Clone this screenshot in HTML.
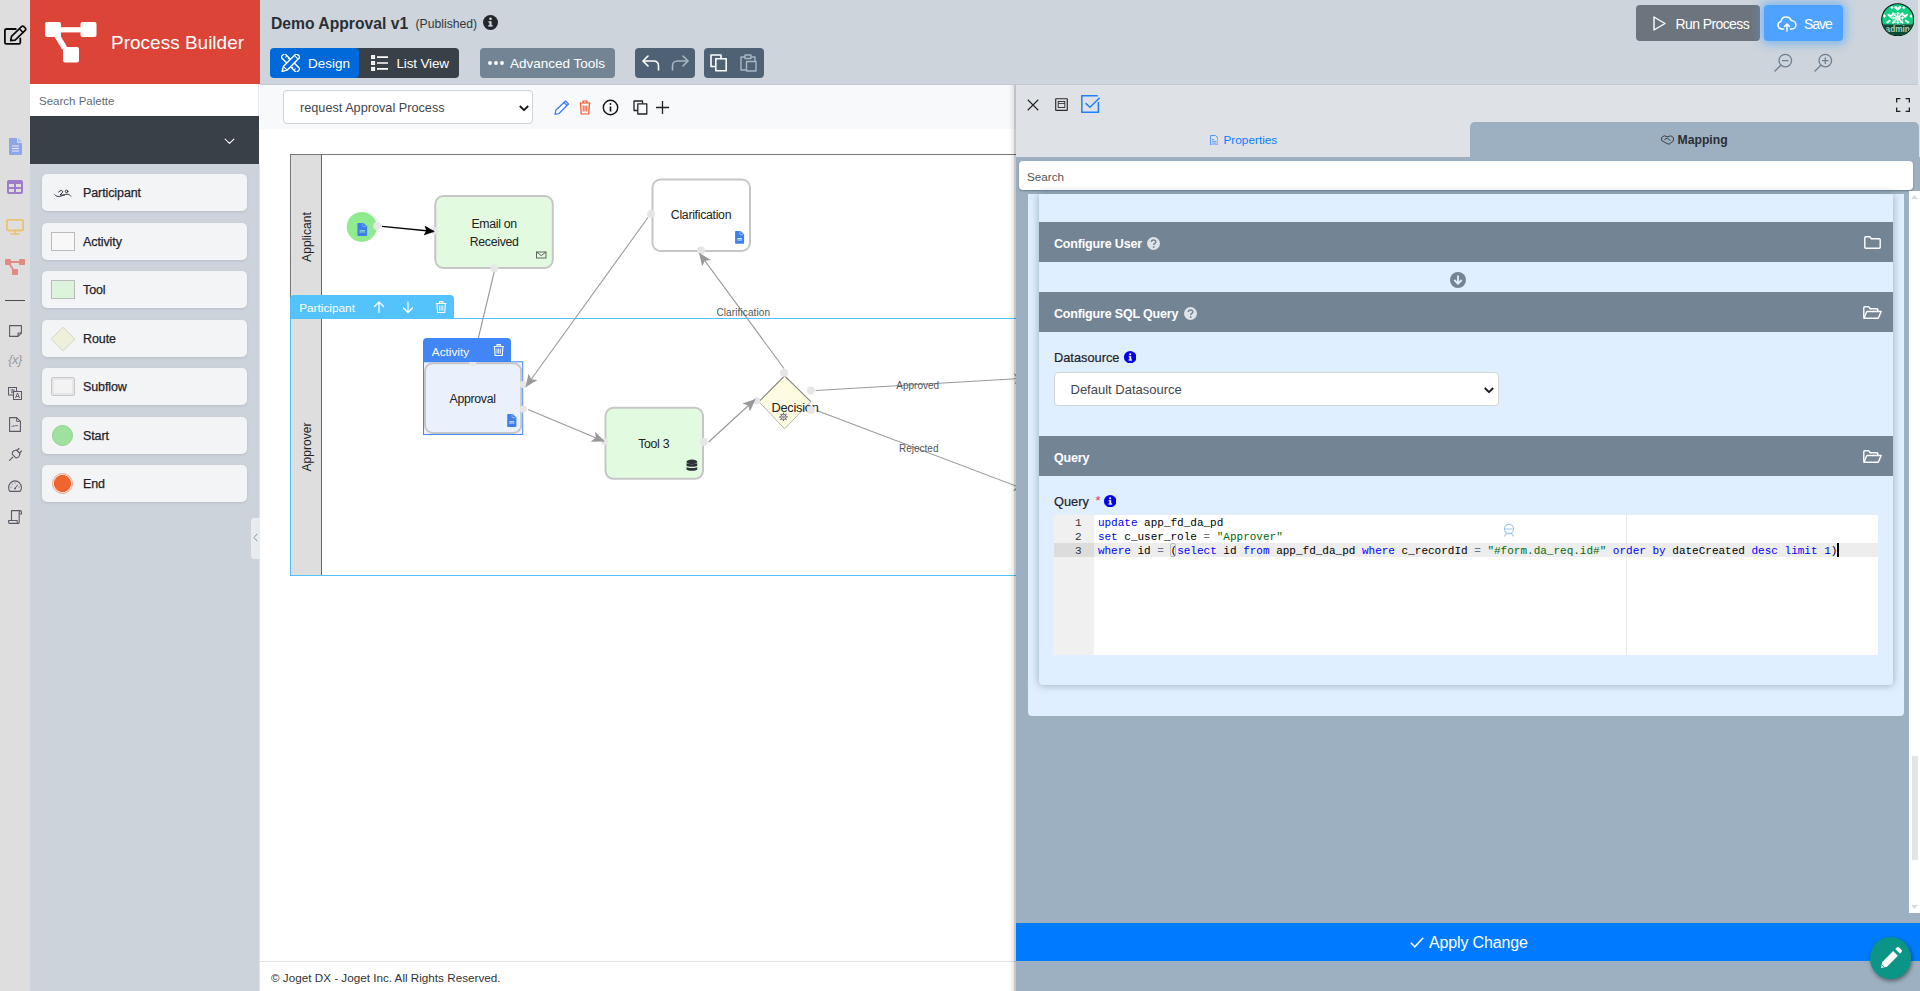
<!DOCTYPE html>
<html>
<head>
<meta charset="utf-8">
<title>Process Builder</title>
<style>
*{box-sizing:border-box;margin:0;padding:0}
html,body{width:1920px;height:991px;overflow:hidden;background:#fff;font-family:"Liberation Sans",sans-serif;font-size:13px;color:#212529}
.abs{position:absolute}
#rail{position:absolute;left:0;top:0;width:30px;height:991px;background:#dedede}
#brand{position:absolute;left:30px;top:0;width:230px;height:84px;background:#dc4438}
#brand .t{position:absolute;left:81px;top:32px;font-size:19px;color:#fff;white-space:nowrap;letter-spacing:0px}
#palsearch{position:absolute;left:30px;top:84px;width:229px;height:32px;background:#fff;border-right:1px solid #e4e6e9}
#palsearch span{position:absolute;left:9px;top:11px;font-size:11.5px;color:#5f6c78}
#paldark{position:absolute;left:30px;top:116px;width:229px;height:48px;background:#394047}
#palette{position:absolute;left:30px;top:164px;width:230px;height:827px;background:#cdd3da;border-right:1px solid #dde1e6}
.pi{position:absolute;left:12px;width:205px;height:37px;background:#f3f4f6;border-radius:5px;box-shadow:0 1px 3px rgba(0,0,0,.10)}
.pi .lbl{position:absolute;left:41px;top:12px;font-size:12.5px;color:#1f2328;font-weight:normal;-webkit-text-stroke:.25px #1f2328;letter-spacing:-.1px}
#topbar{position:absolute;left:260px;top:0;width:1660px;height:85px;background:#cdd4db;border-bottom:1px solid #c5c8cb}
.btn{position:absolute;height:30px;top:48px;color:#fff;font-size:15px;white-space:nowrap}
#canvasbar{position:absolute;left:260px;top:85px;width:756px;height:44px;background:#f8f9fb}
#canvas{position:absolute;left:260px;top:129px;width:756px;height:833px;background:#fff;overflow:hidden}
#footer{position:absolute;left:260px;top:961px;width:756px;height:30px;background:#fff;border-top:1px solid #e2e4e6}
#footer span{position:absolute;left:11px;top:9px;font-size:11.7px;color:#333;white-space:nowrap}
#panel{position:absolute;left:1016px;top:85px;width:904px;height:906px;background:#9db0c1}

.tb{position:absolute;top:48px;height:30px;border-radius:4px}
.tt{position:absolute;top:7px;font-size:13.5px;color:#fff;white-space:nowrap}

.nl{position:absolute;font-size:12.3px;letter-spacing:-.3px;color:#222;text-align:center;white-space:nowrap;line-height:17.5px}
.el{position:absolute;font-size:10px;color:#555;white-space:nowrap}

#panel .hd{position:absolute;left:23px;width:854px;height:40px;background:#738595}
#panel .hd .t{position:absolute;left:15px;top:15px;font-size:12.5px;font-weight:bold;color:#fff;letter-spacing:-.17px;white-space:nowrap}
.kw{color:#0000ff}.st{color:#036a07}.op{color:#687687}.nu{color:#0000cd}
.cl{position:absolute;left:82px;height:14px;line-height:16px;font-family:"Liberation Mono",monospace;font-size:11px;color:#000;white-space:pre}
.ln{position:absolute;left:0;width:27.5px;height:14px;line-height:16px;text-align:right;font-family:"Liberation Mono",monospace;font-size:11px;color:#333}
</style>
</head>
<body>
<div id="rail">
<svg class="abs" style="left:0;top:24px" width="28" height="24" viewBox="0 0 28 24" fill="none" stroke="#0a0a0a" stroke-width="1.8" stroke-linejoin="round" stroke-linecap="round"><path d="M15.8 5H6.3Q4.9 5 4.9 6.4V18.5Q4.9 19.9 6.3 19.9H18.9Q20.3 19.9 20.3 18.5V14.5"/><path d="M10.7 16.7L11.5 12.3 21.8 2.4Q22.8 1.6 23.8 2.5L25.5 4.3Q26.3 5.3 25.4 6.2L15.1 16.1z" stroke-width="1.7"/><path d="M19.4 4.8l3.6 3.7" stroke-width="1.5"/></svg>
<svg class="abs" style="left:9px;top:138px" width="13" height="17" viewBox="0 0 13 17"><path d="M0 1.2C0 .5.5 0 1.2 0H8v3.8C8 4.5 8.5 5 9.2 5H13v10.8c0 .7-.5 1.2-1.2 1.2H1.2C.5 17 0 16.5 0 15.8z" fill="#8ea6e8"/><path d="M9 0l4 4H9.7C9.3 4 9 3.7 9 3.3z" fill="#a9bcf0"/><path d="M3 8h7M3 10.5h7M3 13h7" stroke="#e6ecfb" stroke-width="1.1"/></svg>
<svg class="abs" style="left:7px;top:180px" width="16" height="14" viewBox="0 0 16 14"><rect x="0" y="0" width="16" height="14" rx="2" fill="#9d7cc9"/><rect x="2" y="4" width="5" height="3" fill="#dedede"/><rect x="9" y="4" width="5" height="3" fill="#dedede"/><rect x="2" y="9" width="5" height="3" fill="#dedede"/><rect x="9" y="9" width="5" height="3" fill="#dedede"/></svg>
<svg class="abs" style="left:6px;top:219px" width="18" height="16" viewBox="0 0 18 16" fill="none" stroke="#ecc170" stroke-width="1.8"><rect x=".9" y=".9" width="16.2" height="10.6" rx="1.2"/><path d="M9 11.5v3M4.5 15h9" stroke-width="1.6"/></svg>
<svg class="abs" style="left:5px;top:259px" width="20" height="16" viewBox="0 0 20 16"><rect x="0" y="0" width="6" height="6" rx=".8" fill="#e18a83"/><rect x="14" y="0" width="6" height="6" rx=".8" fill="#e18a83"/><rect x="7" y="10" width="6" height="6" rx=".8" fill="#e18a83"/><path d="M5 3h10M4 4l5 8" stroke="#e18a83" stroke-width="1.8"/></svg>
<div class="abs" style="left:5px;top:300px;width:20px;height:1px;background:#4a4a4a"></div>
<svg class="abs" style="left:9px;top:325px" width="13" height="12" viewBox="0 0 13 12" fill="none" stroke="#5d5866" stroke-width="1.1" stroke-linejoin="round"><path d="M.6.6h11.8v7.4L9 11.4H.6z"/><path d="M12.4 8H9v3.4"/></svg>
<div class="abs" style="left:6px;top:352px;width:18px;text-align:center;font-size:13px;font-style:italic;color:#9a9aa2;letter-spacing:-.5px">{x}</div>
<svg class="abs" style="left:8px;top:387px" width="14" height="13" viewBox="0 0 14 13" fill="none" stroke="#5d5866" stroke-width="1"><rect x=".5" y=".5" width="8" height="7.5" fill="#dedede"/><rect x="5.5" y="4.5" width="8" height="8" fill="#dedede"/><path d="M2.5 3h4M4.5 2v1.2M3 6c1.5-.5 2.5-1.5 3-3M3.5 4c.5 1 1.2 1.6 2.5 2" stroke-width=".8"/><path d="M7.5 11l2-5 2 5M8.2 9.5h2.6" stroke-width=".9"/></svg>
<svg class="abs" style="left:9px;top:417px" width="12" height="15" viewBox="0 0 12 15" fill="none" stroke="#5d5866" stroke-width="1.1" stroke-linejoin="round"><path d="M.6.6h7l3.8 3.8v10H.6z"/><path d="M7.6.6v3.8h3.8" stroke-width=".9"/><path d="M2.5 10l1.5-1.5 1.2 1 1.5-1.5 1 1 1.2-.5" stroke-width=".9"/></svg>
<svg class="abs" style="left:9px;top:448px" width="13" height="13" viewBox="0 0 13 13" fill="none" stroke="#5d5866" stroke-width="1.1" stroke-linecap="round" stroke-linejoin="round"><path d="M.6 12.4l3.2-3.2"/><path d="M3.2 6.2l3.6 3.6c1.5.2 2.8-.6 3.4-1.8L11 5.5 7.5 2 5 2.8C3.8 3.4 3 4.7 3.2 6.2z"/><path d="M8 2.5l2-2M10.5 5l2-2"/></svg>
<svg class="abs" style="left:8px;top:480px" width="14" height="12" viewBox="0 0 14 12" fill="none" stroke="#5d5866" stroke-width="1.1" stroke-linecap="round"><path d="M2 11.4C1.1 10.3.6 8.9.6 7.4.6 3.8 3.5.9 7 .9s6.4 2.9 6.4 6.5c0 1.5-.5 2.9-1.4 4z"/><path d="M7 8.5l2.5-3.5" stroke-width="1"/><circle cx="7" cy="8.5" r=".9" fill="#5d5866" stroke="none"/><path d="M3 7h.1M4.2 4.2h.1M7 3h.1M11 7h.1" stroke-width="1"/></svg>
<svg class="abs" style="left:8px;top:510px" width="14" height="14" viewBox="0 0 14 14" fill="none" stroke="#5d5866" stroke-width="1.1" stroke-linejoin="round"><path d="M3.5 10.5V.6h8.5c.8 0 1.4.6 1.4 1.4V4h-2.2"/><path d="M11.2 4V2c0-.8.4-1.4 1-1.4"/><path d="M.6 10.5h8.6v1.5c0 .8.6 1.4 1.4 1.4H2c-.8 0-1.4-.6-1.4-1.4z"/><path d="M11.2 4v8c0 .8-.3 1.4-.8 1.4"/></svg>
</div>
<div id="brand">
<svg class="abs" style="left:15px;top:22px" width="52" height="41" viewBox="0 0 52 41"><rect x="0" y="0" width="16" height="15" rx="2" fill="#fff"/><rect x="35.5" y="0" width="16" height="15" rx="2" fill="#fff"/><rect x="18" y="25" width="16" height="15.5" rx="2" fill="#fff"/><path d="M14 7.8h24" stroke="#fff" stroke-width="5.2"/><path d="M10.5 11l9 15" stroke="#fff" stroke-width="5.6"/></svg>
<div class="t">Process Builder</div></div>
<div id="palsearch"><span>Search Palette</span></div>
<div id="paldark"><svg class="abs" style="left:193.5px;top:22.3px" width="11" height="7" viewBox="0 0 12 8" fill="none" stroke="#fff" stroke-width="1.25" stroke-linecap="round" stroke-linejoin="round"><path d="M1 1.2l5 5 5-5"/></svg></div>
<div id="palette">
<div class="pi" style="top:10px"><svg class="abs" style="left:12px;top:15px" width="18" height="9" viewBox="0 0 18 9" fill="none" stroke="#2a2a3a" stroke-width=".95" stroke-linecap="round" stroke-linejoin="round"><path d="M.6 5.6c1.5 1.8 3.5 2.3 6 1.6 2.5-.7 4-2 6.5-2 1.8 0 2.8.8 3.8 2"/><path d="M4.6 3L7.2 1.2l1.8 1.6L6 6h4.5"/><circle cx="12.6" cy="2.4" r="1.3"/></svg><div class="lbl">Participant</div></div>
<div class="pi" style="top:58.5px"><div class="abs" style="left:9px;top:9px;width:24px;height:19px;background:#f8f8f9;border:1px solid #bbb"></div><div class="lbl">Activity</div></div>
<div class="pi" style="top:107px"><div class="abs" style="left:9px;top:9px;width:24px;height:19px;background:#dcf3dc;border:1px solid #bbb"></div><div class="lbl">Tool</div></div>
<div class="pi" style="top:155.5px"><svg class="abs" style="left:8px;top:6px" width="26" height="26" viewBox="0 0 26 26"><path d="M13 1.2L24.8 13 13 24.8 1.2 13z" fill="#eef0dc" stroke="#d4d6c4" stroke-width="1"/></svg><div class="lbl">Route</div></div>
<div class="pi" style="top:204px"><div class="abs" style="left:9px;top:9px;width:24px;height:19px;background:#f3f3f4;border:1px solid #c8c8c8;border-radius:2px;box-shadow:inset 0 0 0 2px #e6e6e8"></div><div class="lbl">Subflow</div></div>
<div class="pi" style="top:252.5px"><div class="abs" style="left:10px;top:8px;width:21px;height:21px;border-radius:50%;background:#9fe29f;border:1px solid #8fd08f"></div><div class="lbl">Start</div></div>
<div class="pi" style="top:301px"><div class="abs" style="left:10px;top:8px;width:21px;height:21px;border-radius:50%;background:radial-gradient(circle,#f0642f 0,#f0642f 8.2px,#fce4da 8.8px,#fce4da 100%);border:1px solid #f3a78c"></div><div class="lbl">End</div></div>
<div class="abs" style="left:221px;top:354px;width:9px;height:41px;background:#e9ecef;border-radius:3px 0 0 3px"><svg class="abs" style="left:2px;top:15px" width="5" height="9" viewBox="0 0 5 9" fill="none" stroke="#8a96a3" stroke-width="1"><path d="M4.2.8L1 4.5l3.2 3.7"/></svg></div>
</div>
<div id="topbar">
<div class="abs" style="left:11px;top:14.5px;font-size:15.7px;font-weight:bold;color:#2b2f33;white-space:nowrap">Demo Approval v1</div>
<div class="abs" style="left:155.5px;top:17px;font-size:12.2px;color:#33383d;white-space:nowrap">(Published)</div>
<svg class="abs" style="left:223px;top:15px" width="15" height="15" viewBox="0 0 15 15"><circle cx="7.5" cy="7.5" r="7.5" fill="#23272b"/><rect x="6.4" y="6.3" width="2.2" height="5" fill="#cdd4db"/><rect x="5.4" y="6.3" width="2" height="1.3" fill="#cdd4db"/><rect x="5.2" y="10.2" width="4.6" height="1.3" fill="#cdd4db"/><circle cx="7.5" cy="3.8" r="1.35" fill="#cdd4db"/></svg>

<div class="tb" style="left:10px;width:89px;background:#0069d9;border-radius:4px;z-index:2">
<svg class="abs" style="left:11px;top:6px" width="19" height="18" viewBox="0 0 19 18" fill="#0069d9" stroke="#fff" stroke-width="1.4" stroke-linejoin="round"><g transform="rotate(45 9.5 9)"><rect x="-1.5" y="6.4" width="22" height="5.2"/><path d="M2 6.7v2M5 6.7v1.5M14 11.3v-1.5M17 11.3v-2" stroke-width="1"/></g><g transform="rotate(-45 9.5 9)"><path d="M20.5 6.4H2L-2.4 9 2 11.6h18.5z"/><path d="M2 6.7v4.6M17.5 6.7v4.6" stroke-width="1.1"/></g></svg>
<div class="tt" style="left:38px;top:8px">Design</div></div>
<div class="tb" style="left:92px;width:107px;background:#394047;border-radius:0 4px 4px 0">
<svg class="abs" style="left:19px;top:7px" width="17" height="16" viewBox="0 0 17 16" fill="#e8e8e8" stroke="#fff"><rect x=".6" y=".6" width="3" height="3" stroke-width="1"/><rect x=".6" y="6.5" width="3" height="3" stroke-width="1"/><rect x=".6" y="12.4" width="3" height="3" stroke-width="1"/><path d="M6 2.1h11M6 8h11M6 13.9h11" stroke-width="1.7"/></svg>
<div class="tt" style="left:44.5px;top:8px;letter-spacing:-.15px">List View</div></div>

<div class="tb" style="left:220px;width:135px;background:#738595">
<svg class="abs" style="left:8px;top:13px" width="17" height="4" viewBox="0 0 17 4" fill="#fff"><circle cx="2" cy="2" r="1.9"/><circle cx="8" cy="2" r="1.9"/><circle cx="14" cy="2" r="1.9"/></svg>
<div class="tt" style="left:30px;top:8px;letter-spacing:0">Advanced Tools</div></div>

<div class="tb" style="left:375px;width:60px;background:#4f6275">
<svg class="abs" style="left:7px;top:7px" width="18" height="16" viewBox="0 0 18 16" fill="none" stroke="#fff" stroke-width="1.6" stroke-linecap="round" stroke-linejoin="round"><path d="M6 1L1 6l5 5"/><path d="M1.5 6h10c3 0 5 2 5 5v4"/></svg>
<svg class="abs" style="left:36px;top:7px" width="18" height="16" viewBox="0 0 18 16" fill="none" stroke="#a9b6c3" stroke-width="1.6" stroke-linecap="round" stroke-linejoin="round"><path d="M12 1l5 5-5 5"/><path d="M16.5 6h-10c-3 0-5 2-5 5v4"/></svg>
</div>
<div class="tb" style="left:444px;width:60px;background:#4f6275">
<svg class="abs" style="left:6px;top:6px" width="18" height="18" viewBox="0 0 18 18" fill="none" stroke="#fff" stroke-width="1.6" stroke-linejoin="round"><path d="M5.5 12.5H1V1h10v3.5"/><rect x="5.8" y="4.8" width="10.4" height="12"/></svg>
<svg class="abs" style="left:36px;top:6px" width="17" height="18" viewBox="0 0 17 18" fill="none" stroke="#a9b6c3" stroke-width="1.4" stroke-linejoin="round"><path d="M5 3H1v13h5"/><path d="M11 3h4v4"/><rect x="5" y="1" width="6" height="3.5"/><rect x="6.5" y="7.5" width="9.5" height="9.5"/></svg>
</div>

<div class="abs" style="left:1376px;top:5px;width:124px;height:36px;border-radius:4px;background:#6c757d">
<svg class="abs" style="left:17px;top:11px" width="13" height="15" viewBox="0 0 13 15" fill="none" stroke="#fff" stroke-width="1.4" stroke-linejoin="round"><path d="M1 1l11 6.5L1 14z"/></svg>
<div class="abs" style="left:39.5px;top:11px;font-size:14px;color:#fff;white-space:nowrap;letter-spacing:-.6px">Run Process</div></div>
<div class="abs" style="left:1504px;top:5px;width:79px;height:36px;border-radius:4px;background:#4da3ff;box-shadow:0 0 10px 3px rgba(77,163,255,.6)">
<svg class="abs" style="left:13px;top:11px" width="20" height="16" viewBox="0 0 20 16" fill="none" stroke="#fff" stroke-width="1.5" stroke-linecap="round" stroke-linejoin="round"><path d="M6.5 13H5c-2.3 0-4-1.7-4-3.8 0-1.8 1.3-3.3 3-3.7C4.3 2.9 6.5 1 9.2 1c2.3 0 4.3 1.4 5 3.5C16.9 4.7 19 6.6 19 9c0 2.2-1.8 4-4 4h-1.5"/><path d="M10 15V8.5M7.5 10.5L10 8l2.5 2.5"/></svg>
<div class="abs" style="left:40px;top:11px;font-size:14px;color:#fff;white-space:nowrap;letter-spacing:-1px">Save</div></div>

<svg class="abs" style="left:1514px;top:53px" width="19" height="19" viewBox="0 0 19 19" fill="none" stroke="#6c7f91" stroke-width="1.3" stroke-linecap="round"><circle cx="11.3" cy="7.6" r="6.3"/><path d="M6.8 12.2L1 18"/><path d="M8.5 7.6h5.6"/></svg>
<svg class="abs" style="left:1554px;top:53px" width="19" height="19" viewBox="0 0 19 19" fill="none" stroke="#6c7f91" stroke-width="1.3" stroke-linecap="round"><circle cx="11.3" cy="7.6" r="6.3"/><path d="M6.8 12.2L1 18"/><path d="M8.5 7.6h5.6M11.3 4.8v5.6"/></svg>

<svg class="abs" style="left:1620.5px;top:2.5px" width="33.5" height="33.5" viewBox="0 0 34 34"><defs><clipPath id="avc"><circle cx="17" cy="17" r="15.7"/></clipPath></defs><circle cx="17" cy="17" r="16.8" fill="#0c1512"/><g clip-path="url(#avc)"><rect width="34" height="34" fill="#10cf80"/>
<g transform="translate(0 -2.3)"><g fill="#fff"><path d="M17 10.5l-3.2-3.2c-.9-1 .6-2.6 1.7-1.6l1.5 1.3 1.5-1.3c1.1-1 2.6.6 1.7 1.6z"/><path d="M9.5 17.5l-2.7-2.7c-.8-.9.5-2.2 1.4-1.4l1.3 1.1 1.3-1.1c.9-.8 2.2.5 1.4 1.4z"/><path d="M24.5 17.5l-2.7-2.7c-.8-.9.5-2.2 1.4-1.4l1.3 1.1 1.3-1.1c.9-.8 2.2.5 1.4 1.4z"/><path d="M11 5l1.6 2L11 9 9.4 7zM23 5l1.6 2L23 9l-1.6-2zM3.5 13.5l1.5 2-1.5 2-1.5-2zM30.5 13.5l1.5 2-1.5 2-1.5-2z"/><path d="M5 21.5l4-2.5 1 1.3-3.5 3zM29 21.5l-4-2.5-1 1.3 3.5 3z"/></g>
<g stroke="#fff" fill="none"><path d="M17 11.5v13M11.5 12l11 11M22.5 12l-11 11M10.5 17.5h13" stroke-width="1.7" opacity=".92"/><rect x="12.3" y="12.8" width="9.4" height="9.4" stroke-width=".8" opacity=".7"/><path d="M13 24v2M21 24v2M15 23.5v2.5M19 23.5v2.5" stroke-width="1.2"/></g></g>
<rect x="0" y="22" width="34" height="12" fill="#0b4a32"/><rect x="0" y="22" width="34" height="1.5" fill="#23463a"/><text x="17" y="29.8" font-family="Liberation Sans, sans-serif" font-size="8.4" fill="#a9d3bf" text-anchor="middle" font-weight="bold">admin</text></g></svg>
</div>
<div class="abs" style="left:1918.3px;top:0;width:1.7px;height:85px;background:#e3e6ea"></div>
<div id="canvasbar">
<div class="abs" style="left:23px;top:5px;width:250px;height:34px;background:#fff;border:1px solid #ced4da;border-radius:4px">
<div class="abs" style="left:16px;top:10px;font-size:12.7px;color:#3f464d;white-space:nowrap">request Approval Process</div>
<svg class="abs" style="left:235px;top:14px" width="10" height="7" viewBox="0 0 10 7" fill="none" stroke="#1a1a1a" stroke-width="1.9" stroke-linejoin="round"><path d="M.8 1l4.2 4.2L9.2 1"/></svg></div>
<svg class="abs" style="left:294px;top:15px" width="16" height="15" viewBox="0 0 16 15" fill="none" stroke="#3b7cf5" stroke-width="1.2" stroke-linejoin="round"><path d="M11.5 1l3 3L5 13.5l-4 .8.8-4z"/><path d="M10 2.5l3 3" /></svg>
<svg class="abs" style="left:319px;top:15px" width="12" height="15" viewBox="0 0 12 15" fill="none" stroke="#f4511e" stroke-width="1.2" stroke-linejoin="round"><path d="M.6 3h10.8M4 3V1h4v2M1.6 3l.6 11h7.6l.6-11" /><path d="M4.2 5.5v6M6 5.5v6M7.8 5.5v6" stroke-width="1"/></svg>
<svg class="abs" style="left:342px;top:14px" width="17" height="17" viewBox="0 0 17 17" fill="none" stroke="#111" stroke-width="1.4"><circle cx="8.5" cy="8.5" r="7.2"/><path d="M8.5 7.5v5" stroke-width="1.6"/><circle cx="8.5" cy="5" r=".95" fill="#111" stroke="none"/></svg>
<svg class="abs" style="left:373px;top:15px" width="15" height="15" viewBox="0 0 15 15" fill="none" stroke="#222" stroke-width="1.3" stroke-linejoin="round"><path d="M4.5 10.5H1V1h8.5v2.5"/><rect x="4.8" y="3.8" width="9" height="10.2"/></svg>
<svg class="abs" style="left:396px;top:16px" width="13" height="13" viewBox="0 0 13 13" fill="none" stroke="#222" stroke-width="1.3"><path d="M6.5 0v13M0 6.5h13"/></svg>
</div>
<div id="canvas">
<svg class="abs" style="left:0;top:0" width="756" height="833" viewBox="260 129 756 833">
<defs>
<marker id="ag" markerWidth="14" markerHeight="11" refX="12" refY="5.5" orient="auto" markerUnits="userSpaceOnUse"><path d="M0 0L12.8 5.5 0 11 3 5.5z" fill="#999"/></marker>
<marker id="ab" markerWidth="12" markerHeight="10" refX="10" refY="5" orient="auto" markerUnits="userSpaceOnUse"><path d="M0 0L10.8 5 0 10 2.2 5z" fill="#000"/></marker>
</defs>
<!-- pool -->
<rect x="290.5" y="154.5" width="760" height="421" fill="#fff" stroke="#777" stroke-width="1"/>
<rect x="291" y="155" width="30.5" height="420.5" fill="#dedede"/>
<path d="M321.5 154.5V575.5" stroke="#666" stroke-width="1"/>
<!-- selected lane -->
<path d="M1020 318.5H290.5V575.5H1020" fill="none" stroke="#55c3fb" stroke-width="1"/>
<!-- start -->
<circle cx="361.8" cy="226.9" r="15" fill="#90ea90"/>
<g transform="translate(357.4 223.1)"><path d="M0 1C0 .4.4 0 1 0h5.2l3.5 3.5v8.4c0 .6-.4 1-1 1H1c-.6 0-1-.4-1-1z" fill="#3d7ff0"/><path d="M5.4 .200v2.6c0 .4.3.700.7.700h2.6" fill="none" stroke="#a8f0a8" stroke-width=".7" opacity=".75"/><rect x="2.1" y="7.22" width="5.5" height="1.2" fill="#a8f0a8"/><rect x="2.1" y="9.32" width="5.5" height=".6" fill="#a8f0a8" opacity=".7"/></g>
<!-- email -->
<rect x="435.3" y="196" width="117.5" height="72" rx="8" fill="#e2fbe0" stroke="#c6c6c6" stroke-width="2"/>
<g fill="none" stroke="#555" stroke-width=".9"><rect x="536.5" y="252" width="9.5" height="6"/><path d="M536.5 252l4.75 3.6 4.75-3.6"/></g>
<!-- clarification -->
<rect x="652.5" y="179.5" width="97.5" height="71.5" rx="8" fill="#fff" stroke="#c6c6c6" stroke-width="2"/>
<g transform="translate(735.1 231.1)"><path d="M0 1C0 .4.4 0 1 0h4.5l3.5 3.5v8.2c0 .6-.4 1-1 1H1c-.6 0-1-.4-1-1z" fill="#3d7ff0"/><path d="M4.7 .200v2.6c0 .4.3.700.7.700h2.6" fill="none" stroke="#ffffff" stroke-width=".7" opacity=".75"/><rect x="2.1" y="7.11" width="4.8" height="1.2" fill="#ffffff"/><rect x="2.1" y="9.21" width="4.8" height=".6" fill="#ffffff" opacity=".7"/></g>
<!-- approval (selected) -->
<rect x="423.5" y="361.8" width="99.2" height="72.7" fill="#eaf1fd" stroke="#4285f4" stroke-width="1"/>
<rect x="425" y="363.3" width="96.2" height="69.7" rx="8" fill="#eaf1fd" stroke="#c6c6c6" stroke-width="2"/>
<g transform="translate(507.2 414.1)"><path d="M0 1C0 .4.4 0 1 0h4.7l3.5 3.5v8.3c0 .6-.4 1-1 1H1c-.6 0-1-.4-1-1z" fill="#3d7ff0"/><path d="M4.9 .200v2.6c0 .4.3.700.7.700h2.6" fill="none" stroke="#eaf1fd" stroke-width=".7" opacity=".75"/><rect x="2.1" y="7.17" width="5" height="1.2" fill="#eaf1fd"/><rect x="2.1" y="9.27" width="5" height=".6" fill="#eaf1fd" opacity=".7"/></g>
<!-- tool 3 -->
<rect x="605.5" y="407.8" width="97.5" height="71" rx="8" fill="#e2fbe0" stroke="#c6c6c6" stroke-width="2"/>
<g transform="translate(686.5 459.5)" fill="#2d3238"><ellipse cx="5.4" cy="2.3" rx="5.4" ry="2.3"/><path d="M0 3.6c1.2 1.4 9.6 1.4 10.8 0v2.6c-1.2 1.5-9.6 1.5-10.8 0z"/><path d="M0 7.4c1.2 1.4 9.6 1.4 10.8 0v2.5c-1.2 1.7-9.6 1.7-10.8 0z"/></g>
<!-- decision -->
<path d="M784.6 375.9L810.8 401.6 784.6 428.8 758.9 401.6z" fill="#fdfbe0" stroke="#b4b4b4" stroke-width="1"/><path d="M758.9 401.6L784.6 375.9 810.8 401.6" fill="none" stroke="#8c8c8c" stroke-width="1.2"/>
<g transform="translate(783.5 416.9)" fill="none" stroke="#5c5c78" stroke-width=".9"><circle r="2.6"/><circle r=".9"/><path d="M0-4.2v1.4M0 4.2v-1.4M-4.2 0h1.4M4.2 0h-1.4M-3-3l1 1M3 3l-1-1M-3 3l1-1M3-3l-1 1" stroke-width="1.1"/></g>
<!-- endpoints -->
<circle cx="377.1" cy="225.9" r="4" fill="#e6e6e6"/><circle cx="434.8" cy="230.8" r="3.6" fill="#e6e6e6"/><circle cx="494.2" cy="268.3" r="4" fill="#e6e6e6"/><circle cx="651" cy="213.9" r="4" fill="#e6e6e6"/><circle cx="701" cy="250.6" r="4" fill="#e6e6e6"/>
<circle cx="523.3" cy="384.5" r="3.6" fill="#e6e6e6"/><circle cx="523.3" cy="409" r="3.6" fill="#e6e6e6"/><circle cx="472.6" cy="362.5" r="3.6" fill="#e6e6e6"/>
<circle cx="604.5" cy="441.5" r="3.6" fill="#e6e6e6"/><circle cx="703.7" cy="441.7" r="4" fill="#e6e6e6"/>
<circle cx="784" cy="372.7" r="4" fill="#e6e6e6"/><circle cx="756.6" cy="400.8" r="3.6" fill="#e6e6e6"/><circle cx="810.8" cy="390.5" r="4" fill="#e6e6e6"/><circle cx="810.8" cy="409.7" r="4" fill="#e6e6e6"/>
<!-- edges -->
<path d="M494.2 272L472.6 362" stroke="#999" stroke-width="1.1" fill="none"/>
<path d="M648 217.5L526 386.5" stroke="#999" stroke-width="1.1" fill="none" marker-end="url(#ag)"/>
<path d="M528 409.5L604 441.3" stroke="#999" stroke-width="1.1" fill="none" marker-end="url(#ag)"/>
<path d="M708.6 442L755 399.5" stroke="#999" stroke-width="1.1" fill="none" marker-end="url(#ag)"/>
<path d="M784 368.5L699.5 253.5" stroke="#999" stroke-width="1.1" fill="none" marker-end="url(#ag)"/>
<path d="M815.6 390.5L1026 378.2" stroke="#999" stroke-width="1.1" fill="none" marker-end="url(#ag)"/>
<path d="M816.7 410.4L1026 489.8" stroke="#999" stroke-width="1.1" fill="none" marker-end="url(#ag)"/>
<path d="M382 226.3L434 231.5" stroke="#000" stroke-width="1.3" fill="none" marker-end="url(#ab)"/>
<!-- activity tag -->
<path d="M423 362V342a4 4 0 0 1 4-4h80a4 4 0 0 1 4 4v20z" fill="#4285f4"/>
<g transform="translate(493.5 344)" fill="none" stroke="#fff" stroke-width="1.1" stroke-linejoin="round"><path d="M0 2.5h10.4M3.5 2.5V.6h3.4v1.9M1 2.5l.6 9h7.2l.6-9"/><path d="M3.6 4.5v5.2M5.2 4.5v5.2M6.8 4.5v5.2" stroke-width=".9"/></g>
<!-- participant tag -->
<path d="M290 318.5V299a4 4 0 0 1 4-4h156a4 4 0 0 1 4 4v19.5z" fill="#55c3fb"/>
<g fill="none" stroke="#fff" stroke-width="1.2" stroke-linecap="round" stroke-linejoin="round"><path d="M379 312.5v-10.5M374.5 306.5l4.5-4.5 4.5 4.5"/><path d="M408 302v10.5M403.5 308l4.5 4.5 4.5-4.5"/></g>
<g transform="translate(436 301)" fill="none" stroke="#fff" stroke-width="1.1" stroke-linejoin="round"><path d="M0 2.5h10.4M3.5 2.5V.6h3.4v1.9M1 2.5l.6 9h7.2l.6-9"/><path d="M3.6 4.5v5.2M5.2 4.5v5.2M6.8 4.5v5.2" stroke-width=".9"/></g>
</svg>
<div class="nl" style="left:134.2px;top:87px;width:200px">Email on<br>Received</div>
<div class="nl" style="left:341px;top:78px;width:200px">Clarification</div>
<div class="nl" style="left:112.6px;top:262px;width:200px">Approval</div>
<div class="nl" style="left:293.7px;top:307px;width:200px">Tool 3</div>
<div class="nl" style="left:435px;top:269.8px;width:200px;font-size:12.8px;letter-spacing:-.25px">Decision</div>
<div class="abs" style="left:546.8px;top:276.7px;width:8px;height:8px;border-radius:50%;background:#e6e6e6"></div>
<div class="el" style="left:456.4px;top:178.4px;letter-spacing:.12px">Clarification</div>
<div class="el" style="left:636.3px;top:251.2px">Approved</div>
<div class="el" style="left:639px;top:314px">Rejected</div>
<div class="abs" style="left:39.2px;top:172.3px;font-size:11.8px;color:#fff">Participant</div>
<div class="abs" style="left:171.8px;top:215.6px;font-size:11.8px;color:#fff">Activity</div>
<div class="abs" style="left:-3px;top:98.5px;width:100px;height:18px;line-height:18px;text-align:center;font-size:12.1px;color:#222;transform:rotate(-90deg)">Applicant</div>
<div class="abs" style="left:-3px;top:309px;width:100px;height:18px;line-height:18px;text-align:center;font-size:12.1px;color:#222;transform:rotate(-90deg)">Approver</div>
</div>
<div id="footer"><span>© Joget DX - Joget Inc. All Rights Reserved.</span></div>
<div class="abs" style="left:1008px;top:85px;width:8px;height:906px;background:linear-gradient(to right,rgba(0,0,0,0) 0,rgba(0,0,0,.03) 40%,rgba(0,0,0,.10) 75%,rgba(0,0,0,.22) 75%,rgba(0,0,0,.22) 100%)"></div>
<div id="panel">
<div class="abs" style="left:0;top:0;width:904px;height:72px;background:#dee1e6"></div>
<div class="abs" style="left:454px;top:37px;width:448.7px;height:36px;background:#9db0c1;border-radius:5px 5px 0 0"></div>
<!-- header icons -->
<svg class="abs" style="left:11px;top:13.5px" width="12" height="12" viewBox="0 0 13 13" fill="none" stroke="#222" stroke-width="1.2"><path d="M.8.8l11.4 11.4M12.2.800L.8 12.2"/></svg>
<svg class="abs" style="left:39px;top:13px" width="13" height="13" viewBox="0 0 13 13" fill="none" stroke="#2a2a2a" stroke-width="1.15"><rect x=".7" y=".7" width="11.6" height="11.6" rx=".4"/><rect x="3.2" y="3.5" width="6.6" height="6" stroke-width=".9"/><path d="M3.2 5.5h6.6" stroke-width=".8"/></svg>
<svg class="abs" style="left:65px;top:10px" width="19" height="18" viewBox="0 0 19 18" fill="none" stroke="#1f80ff" stroke-width="1.5" stroke-linejoin="miter" stroke-linecap="butt"><path d="M17.4 7v10.3H.8V.8h16"/><path d="M5.1 8.6l3.9 3.6 9.2-9" stroke-linecap="round"/></svg>
<svg class="abs" style="left:880px;top:12.5px" width="14" height="14" viewBox="0 0 15 15" fill="none" stroke="#222" stroke-width="1.4"><path d="M.7 4.7V.7h4M10.3.7h4v4M14.3 10.3v4h-4M4.7 14.3h-4v-4"/></svg>
<!-- tabs -->
<svg class="abs" style="left:193.5px;top:49.5px" width="8.5" height="10.5" viewBox="0 0 8.5 10.5" fill="none" stroke="#4a8dfc" stroke-width=".9" stroke-linejoin="round"><path d="M.5.5h5l2.5 2.5v7H.5z"/><path d="M2 4.5h2M2 6.3h4.5M2 8.1h4.5" stroke-width=".8"/></svg>
<div class="abs" style="left:207.5px;top:48px;font-size:11.8px;color:#0a7cff">Properties</div>
<svg class="abs" style="left:645px;top:50px" width="13" height="10" viewBox="0 0 13 10" fill="none" stroke="#333" stroke-width=".9" stroke-linejoin="round"><path d="M.6 2.5l2.6-1.7 3.3 1 3.3-1 2.6 1.7v3.5l-4.4 3.3-3-1.3L.6 5.5z"/><path d="M3.5 4.5l3-1.5 3 3" /></svg>
<div class="abs" style="left:661.5px;top:47.5px;font-size:12.2px;font-weight:bold;color:#2b2f33">Mapping</div>
<!-- search -->
<div class="abs" style="left:2.5px;top:75.5px;width:894.5px;height:29.5px;background:#fff;border-radius:4px;box-shadow:0 1px 2px rgba(60,80,100,.55)"></div>
<div class="abs" style="left:11px;top:84.5px;font-size:11.7px;color:#555">Search</div>
<!-- containers -->
<div class="abs" style="left:12px;top:109px;width:875.8px;height:522px;background:#e0efff;border-radius:0 0 4px 4px"></div>
<div class="abs" style="left:23px;top:109px;width:854px;height:491px;background:#e0efff;border-radius:0 0 4px 4px;box-shadow:0 0 8px rgba(90,110,130,.55)"></div>
<!-- configure user -->
<div class="hd" style="top:137px"><div class="t">Configure User</div></div>
<svg class="abs" style="left:131px;top:152px" width="13" height="13" viewBox="0 0 13 13"><circle cx="6.5" cy="6.5" r="6.5" fill="#dfe3e8"/><path d="M4.4 5.1c0-1.3 1-2.1 2.2-2.1 1.3 0 2.2.8 2.2 1.9 0 1.5-2 1.6-2 3.1" fill="none" stroke="#738595" stroke-width="1.5"/><circle cx="6.7" cy="10" r=".95" fill="#738595"/></svg>
<svg class="abs" style="left:848px;top:151px" width="17" height="13" viewBox="0 0 17 13" fill="none" stroke="#fff" stroke-width="1.4" stroke-linejoin="round"><path d="M.8 1.8c0-.6.4-1 1-1h4l1.6 2h7.8c.6 0 1 .4 1 1v7.4c0 .6-.4 1-1 1H1.8c-.6 0-1-.4-1-1z"/></svg>
<svg class="abs" style="left:434px;top:187px" width="16" height="16" viewBox="0 0 16 16"><circle cx="8" cy="8" r="8" fill="#738595"/><path d="M8 3.5v8M4.3 8l3.7 3.7L11.7 8" fill="none" stroke="#e0efff" stroke-width="1.8"/></svg>
<!-- configure sql -->
<div class="hd" style="top:207px"><div class="t">Configure SQL Query</div></div>
<svg class="abs" style="left:167.7px;top:222px" width="13" height="13" viewBox="0 0 13 13"><circle cx="6.5" cy="6.5" r="6.5" fill="#dfe3e8"/><path d="M4.4 5.1c0-1.3 1-2.1 2.2-2.1 1.3 0 2.2.8 2.2 1.9 0 1.5-2 1.6-2 3.1" fill="none" stroke="#738595" stroke-width="1.5"/><circle cx="6.7" cy="10" r=".95" fill="#738595"/></svg>
<svg class="abs" style="left:847px;top:221px" width="19" height="13" viewBox="0 0 19 13" fill="none" stroke="#fff" stroke-width="1.4" stroke-linejoin="round"><path d="M.8 11.5V1.8c0-.6.4-1 1-1h3.8l1.6 2h6.6c.6 0 1 .4 1 1v1.7"/><path d="M.9 12.2l3-6.7h14.3l-3 6.7z"/></svg>
<div class="abs" style="left:38px;top:264.5px;font-size:12.8px;color:#1f2327;-webkit-text-stroke:.2px #1f2327">Datasource</div>
<svg class="abs" style="left:108.1px;top:266.1px" width="12.4" height="12.4" viewBox="0 0 13 13"><circle cx="6.5" cy="6.5" r="6.5" fill="#0000ee"/><rect x="5.7" y="5.5" width="1.9" height="4.3" fill="#fff"/><rect x="4.9" y="5.5" width="1.6" height="1.1" fill="#fff"/><rect x="4.7" y="8.9" width="3.8" height="1.1" fill="#fff"/><circle cx="6.5" cy="3.5" r="1.1" fill="#fff"/></svg>
<div class="abs" style="left:38px;top:287px;width:445px;height:33.5px;background:#fff;border:1px solid #ced4da;border-radius:4px">
<div class="abs" style="left:15.5px;top:9px;font-size:13px;color:#3f464d;white-space:nowrap">Default Datasource</div>
<svg class="abs" style="left:429px;top:14px" width="10" height="7" viewBox="0 0 10 7" fill="none" stroke="#1a1a1a" stroke-width="1.9" stroke-linejoin="round"><path d="M.8 1l4.2 4.2L9.2 1"/></svg></div>
<!-- query -->
<div class="hd" style="top:351px"><div class="t">Query</div></div>
<svg class="abs" style="left:847px;top:365px" width="19" height="13" viewBox="0 0 19 13" fill="none" stroke="#fff" stroke-width="1.4" stroke-linejoin="round"><path d="M.8 11.5V1.8c0-.6.4-1 1-1h3.8l1.6 2h6.6c.6 0 1 .4 1 1v1.7"/><path d="M.9 12.2l3-6.7h14.3l-3 6.7z"/></svg>
<div class="abs" style="left:38px;top:409px;font-size:12.8px;color:#1f2327;-webkit-text-stroke:.2px #1f2327">Query</div>
<div class="abs" style="left:79.5px;top:408px;font-size:13px;color:#e53935">*</div>
<svg class="abs" style="left:87.5px;top:410.1px" width="12.4" height="12.4" viewBox="0 0 13 13"><circle cx="6.5" cy="6.5" r="6.5" fill="#0000ee"/><rect x="5.7" y="5.5" width="1.9" height="4.3" fill="#fff"/><rect x="4.9" y="5.5" width="1.6" height="1.1" fill="#fff"/><rect x="4.7" y="8.9" width="3.8" height="1.1" fill="#fff"/><circle cx="6.5" cy="3.5" r="1.1" fill="#fff"/></svg>
<!-- editor -->
<div class="abs" style="left:38px;top:430px;width:824px;height:140px;background:#fff;overflow:hidden">
<div class="abs" style="left:0;top:0;width:40px;height:140px;background:#f0f0f0"></div>
<div class="abs" style="left:0;top:28px;width:40px;height:14px;background:#dcdcdc"></div>
<div class="abs" style="left:40px;top:28px;width:784px;height:14px;background:#ededed"></div>
<div class="abs" style="left:571.5px;top:0;width:1px;height:140px;background:#e8e8e8"></div>
<div class="ln" style="top:0">1</div><div class="ln" style="top:14px">2</div><div class="ln" style="top:28px">3</div>
<div class="cl" style="left:43.9px;top:0"><span class="kw">update</span> app_fd_da_pd</div>
<div class="cl" style="left:43.9px;top:14px"><span class="kw">set</span> c_user_role <span class="op">=</span> <span class="st">"Approver"</span></div>
<div class="cl" style="left:43.9px;top:28px"><span class="kw">where</span> id <span class="op">=</span> (<span class="kw">select</span> id <span class="kw">from</span> app_fd_da_pd <span class="kw">where</span> c_recordId <span class="op">=</span> <span class="st">"#form.da_req.id#"</span> <span class="kw">order</span> <span class="kw">by</span> dateCreated <span class="kw">desc</span> <span class="kw">limit</span> <span class="nu">1</span>)</div>
<div class="abs" style="left:116.3px;top:28px;width:6px;height:14px;border:1px solid #bdbdbd;border-radius:2px"></div>
<div class="abs" style="left:783px;top:28px;width:2px;height:14px;background:#000"></div>
<svg class="abs" style="left:448px;top:8px" width="14" height="15" viewBox="0 0 14 15" fill="none" stroke="#9fc6f0" stroke-width="1.1"><circle cx="7" cy="6" r="4.6"/><path d="M3.2 6h7.6M2.5 13.5c.5-2 2-3.3 4.5-3.3s4 1.3 4.5 3.3"/></svg>
</div>
<!-- scrollbar -->
<div class="abs" style="left:893px;top:106px;width:11px;height:722px;background:#fff"></div>
<div class="abs" style="left:895.5px;top:671px;width:6.5px;height:103.5px;background:#e4e4e4"></div>
<svg class="abs" style="left:895px;top:110px" width="7" height="4" viewBox="0 0 7 4"><path d="M0 4L3.5 0 7 4z" fill="#d8d8d8"/></svg>
<svg class="abs" style="left:895px;top:820px" width="7" height="4" viewBox="0 0 7 4"><path d="M0 0L3.5 4 7 0z" fill="#d8d8d8"/></svg>
<!-- apply -->
<div class="abs" style="left:0;top:838px;width:904px;height:38px;background:#007bff"></div>
<svg class="abs" style="left:394px;top:852px" width="14" height="11" viewBox="0 0 14 11" fill="none" stroke="#fff" stroke-width="1.5"><path d="M.8 5.8l4 4L13.2.8"/></svg>
<div class="abs" style="left:413px;top:849px;font-size:16px;color:#fff;white-space:nowrap;letter-spacing:-.15px">Apply Change</div>
<!-- fab -->
<div class="abs" style="left:853.5px;top:852px;width:41.5px;height:41.5px;border-radius:50%;background:#0a9587;box-shadow:1px 2px 4px rgba(0,0,0,.45)"></div>
<svg class="abs" style="left:863px;top:862px" width="23" height="23" viewBox="0 0 23 23"><path d="M2 21l1.3-6L14.2 4.1l4.7 4.7L8 19.7z" fill="#fff"/><path d="M3.3 18.2l1.6 1.6" stroke="#0a9587" stroke-width="1"/><path d="M16.3 2l1.4-1.4c.7-.7 1.8-.7 2.5 0l2.2 2.2c.7.7.7 1.8 0 2.5L21 6.7z" fill="#fff"/></svg>
</div>
</body>
</html>
